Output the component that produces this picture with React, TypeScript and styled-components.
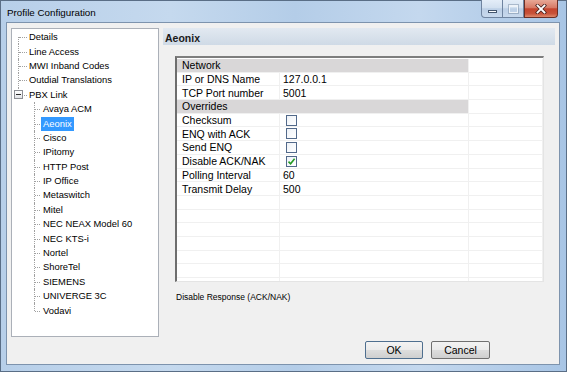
import React from "react";
import styled, { createGlobalStyle } from "styled-components";

const GlobalStyle = createGlobalStyle`
    html, body {
        margin: 0;
        padding: 0;
        background: #ffffff;
    }
    body {
        font-family: "Liberation Sans", Arial, sans-serif;
    }
    * {
        box-sizing: border-box;
    }
`;

const Window = styled.div`
    width: 567px;
    height: 372px;
    display: flex;
    flex-direction: column;
    border: 1px solid #5a6e86;
    padding: 0 6px 6px 5px;
    background: linear-gradient(90deg, #b7cfe9 0%, #c5d9ee 30%, #b4cde8 52%, #c4d8ee 74%, #a8c5e5 100%);
`;

const TitleBar = styled.div`
    height: 21px;
    flex: none;
    display: flex;
    align-items: flex-start;
    padding-left: 1px;
`;

const Title = styled.span`
    font-size: 9.8px;
    line-height: 21px;
    padding-top: 1px;
    color: #000;
`;

const Controls = styled.div`
    margin-left: auto;
    margin-right: 2px;
    margin-top: -1px;
    display: flex;
`;

const CaptionButton = styled.div<{ $w: number; $close?: boolean; $first?: boolean }>`
    width: ${(p) => p.$w}px;
    height: 18px;
    display: flex;
    align-items: center;
    justify-content: center;
    border: 1px solid ${(p) => (p.$close ? "#6b2f25" : "#6f84a0")};
    border-top: none;
    border-left: ${(p) => (p.$first || p.$close ? "1px" : "0")} solid ${(p) => (p.$close ? "#6b2f25" : "#6f84a0")};
    border-radius: ${(p) => (p.$close ? "0 0 4px 0" : p.$first ? "0 0 0 4px" : "0")};
    background: ${(p) =>
        p.$close
            ? "linear-gradient(#e8a896 0%, #d77a66 45%, #c4442d 52%, #c8533a 80%, #df8a6d 100%)"
            : "linear-gradient(#e4edf8 0%, #d3e1f0 45%, #bccfe6 52%, #c8d9ed 100%)"};
`;

const MinGlyph = styled.span`
    width: 9px;
    height: 3px;
    margin-top: 5px;
    background: #ffffff;
    border: 1px solid #44566e;
`;

const MaxGlyph = styled.span`
    width: 9px;
    height: 8px;
    border: 1px solid #eef3f9;
    border-top-width: 2px;
    box-shadow: 0 0 0 1px rgba(110, 130, 155, 0.45);
`;

const Client = styled.div`
    flex: 1;
    display: flex;
    flex-direction: column;
    background: #f0f0f0;
    border: 1px solid #7d93ad;
`;

const Body = styled.div`
    display: flex;
    gap: 4px;
    padding: 5px 4px 0 4px;
`;

const Tree = styled.div`
    width: 148px;
    height: 309px;
    flex: none;
    background: #ffffff;
    border: 1px solid #abb0b8;
    padding-top: 1px;
    font-size: 9.4px;
    color: #000;
`;

const TreeRow = styled.div`
    height: 14.4px;
    display: flex;
    align-items: center;
`;

const Indent = styled.span`
    width: 16px;
    height: 100%;
    flex: none;
`;

const Branch = styled.span<{ $w: number; $first?: boolean; $last?: boolean }>`
    position: relative;
    flex: none;
    width: ${(p) => p.$w}px;
    height: 100%;
    display: flex;
    align-items: center;

    &::before {
        content: "";
        position: absolute;
        left: 6px;
        top: ${(p) => (p.$first ? "50%" : "0")};
        bottom: ${(p) => (p.$last ? "50%" : "0")};
        border-left: 1px dotted #a0a0a0;
    }
    &::after {
        content: "";
        position: absolute;
        left: 7px;
        right: 1px;
        top: 50%;
        border-top: 1px dotted #a0a0a0;
    }
`;

const Expander = styled.span`
    position: relative;
    z-index: 1;
    margin-left: 2px;
    width: 9px;
    height: 9px;
    border: 1px solid #8c8e94;
    background: linear-gradient(#ffffff, #e2e4e8);
    display: flex;
    align-items: center;
    justify-content: center;

    &::after {
        content: "";
        width: 5px;
        height: 1px;
        background: #2a2a2a;
    }
`;

const Label = styled.span<{ $sel?: boolean; $pad: number }>`
    padding: 0 ${(p) => p.$pad}px;
    height: 14px;
    line-height: 14px;
    white-space: nowrap;
    background: ${(p) => (p.$sel ? "#3399ff" : "transparent")};
    color: ${(p) => (p.$sel ? "#ffffff" : "#000000")};
`;

const RightPanel = styled.div`
    flex: 1;
    display: flex;
    flex-direction: column;
`;

const PanelHeader = styled.div`
    height: 17px;
    padding: 2px 0 0 2px;
    line-height: 16px;
    font-size: 10.5px;
    font-weight: bold;
    color: #1b1b1b;
    background: linear-gradient(#e2e9f1, #cfdae6);
`;

const Grid = styled.div`
    margin: 11px 0 0 12px;
    width: 369px;
    height: 226px;
    overflow: hidden;
    background: #ffffff;
    border-style: solid;
    border-width: 2px 1px 1px 2px;
    border-color: #7e7e7e #e4e4e4 #e4e4e4 #6e6e6e;
    padding-top: 1px;
`;

const GridRow = styled.div`
    height: 13.7px;
    display: grid;
    grid-template-columns: 103px 189px 1fr;
`;

const Cell = styled.div<{ $pad?: number }>`
    display: flex;
    align-items: center;
    padding-left: ${(p) => p.$pad ?? 3}px;
    border-right: 1px solid #f0f0f0;
    border-bottom: 1px solid #f0f0f0;
    font-size: 10.5px;
    color: #000;
    white-space: nowrap;
    overflow: hidden;
`;

const CategoryCell = styled(Cell)`
    grid-column: span 2;
    background: #d9d7d8;
`;

const CheckBox = styled.span`
    margin-left: 3px;
    width: 11px;
    height: 11px;
    border: 1px solid #52698a;
    background: linear-gradient(135deg, #eef2f7, #ffffff);
    display: flex;
    align-items: center;
    justify-content: center;
`;

const Description = styled.div`
    margin: 10px 0 0 13px;
    font-size: 8.5px;
    line-height: 10px;
    color: #000;
`;

const Footer = styled.div`
    display: flex;
    justify-content: flex-end;
    gap: 8px;
    margin-top: 4px;
    padding-right: 69px;
`;

const Button = styled.button<{ $w: number; $default?: boolean }>`
    width: ${(p) => p.$w}px;
    height: 18px;
    padding: 0;
    font-family: "Liberation Sans", Arial, sans-serif;
    font-size: 10.5px;
    color: #000;
    border: 1px solid ${(p) => (p.$default ? "#4f6f8f" : "#707070")};
    border-radius: 2px;
    background: linear-gradient(#f3f3f3 0%, #ebebeb 48%, #dddddd 52%, #cfcfcf 100%);
`;

const roots = ["Details", "Line Access", "MWI Inband Codes", "Outdial Translations"];
const links = [
    "Avaya ACM",
    "Aeonix",
    "Cisco",
    "IPitomy",
    "HTTP Post",
    "IP Office",
    "Metaswitch",
    "Mitel",
    "NEC NEAX Model 60",
    "NEC KTS-i",
    "Nortel",
    "ShoreTel",
    "SIEMENS",
    "UNIVERGE 3C",
    "Vodavi",
];

type Prop = { name: string; value?: string; check?: boolean; category?: boolean };

const props: Prop[] = [
    { name: "Network", category: true },
    { name: "IP or DNS Name", value: "127.0.0.1" },
    { name: "TCP Port number", value: "5001" },
    { name: "Overrides", category: true },
    { name: "Checksum", check: false },
    { name: "ENQ with ACK", check: false },
    { name: "Send ENQ", check: false },
    { name: "Disable ACK/NAK", check: true },
    { name: "Polling Interval", value: "60" },
    { name: "Transmit Delay", value: "500" },
];

const Tick = () => (
    <svg width="9" height="9" viewBox="0 0 9 9">
        <path d="M1.5 4.6 L3.6 6.7 L7.6 1.8" fill="none" stroke="#239a23" strokeWidth="1.6" />
    </svg>
);

const CloseGlyph = () => (
    <svg width="12" height="10" viewBox="0 0 12 10">
        <path d="M2.5 1.5 L9.5 8.5 M9.5 1.5 L2.5 8.5" stroke="#4a2420" strokeWidth="3.4" strokeLinecap="square" />
        <path d="M2.5 1.5 L9.5 8.5 M9.5 1.5 L2.5 8.5" stroke="#ffffff" strokeWidth="1.8" strokeLinecap="square" />
    </svg>
);

const App = () => {
    const emptyRows = 17 - props.length;

    return (
        <>
            <GlobalStyle />
            <Window>
                <TitleBar>
                    <Title>Profile Configuration</Title>
                    <Controls>
                        <CaptionButton $w={22} $first>
                            <MinGlyph />
                        </CaptionButton>
                        <CaptionButton $w={21}>
                            <MaxGlyph />
                        </CaptionButton>
                        <CaptionButton $w={34} $close>
                            <CloseGlyph />
                        </CaptionButton>
                    </Controls>
                </TitleBar>
                <Client>
                    <Body>
                        <Tree>
                            {roots.map((r, i) => (
                                <TreeRow key={r}>
                                    <Branch $w={16} $first={i === 0} />
                                    <Label $pad={1}>{r}</Label>
                                </TreeRow>
                            ))}
                            <TreeRow>
                                <Branch $w={16} $last>
                                    <Expander />
                                </Branch>
                                <Label $pad={1}>PBX Link</Label>
                            </TreeRow>
                            {links.map((l, i) => (
                                <TreeRow key={l}>
                                    <Indent />
                                    <Branch $w={13} $last={i === links.length - 1} />
                                    <Label $pad={2} $sel={l === "Aeonix"}>
                                        {l}
                                    </Label>
                                </TreeRow>
                            ))}
                        </Tree>
                        <RightPanel>
                            <PanelHeader>Aeonix</PanelHeader>
                            <Grid>
                                {props.map((p) =>
                                    p.category ? (
                                        <GridRow key={p.name}>
                                            <CategoryCell $pad={5}>{p.name}</CategoryCell>
                                            <Cell />
                                        </GridRow>
                                    ) : (
                                        <GridRow key={p.name}>
                                            <Cell $pad={5}>{p.name}</Cell>
                                            <Cell>
                                                {p.check === undefined ? (
                                                    p.value
                                                ) : (
                                                    <CheckBox>{p.check && <Tick />}</CheckBox>
                                                )}
                                            </Cell>
                                            <Cell />
                                        </GridRow>
                                    )
                                )}
                                {Array.from({ length: emptyRows }).map((_, i) => (
                                    <GridRow key={"e" + i}>
                                        <Cell />
                                        <Cell />
                                        <Cell />
                                    </GridRow>
                                ))}
                            </Grid>
                            <Description>Disable Response (ACK/NAK)</Description>
                        </RightPanel>
                    </Body>
                    <Footer>
                        <Button $w={58} $default>
                            OK
                        </Button>
                        <Button $w={59}>Cancel</Button>
                    </Footer>
                </Client>
            </Window>
        </>
    );
};

export default App;
